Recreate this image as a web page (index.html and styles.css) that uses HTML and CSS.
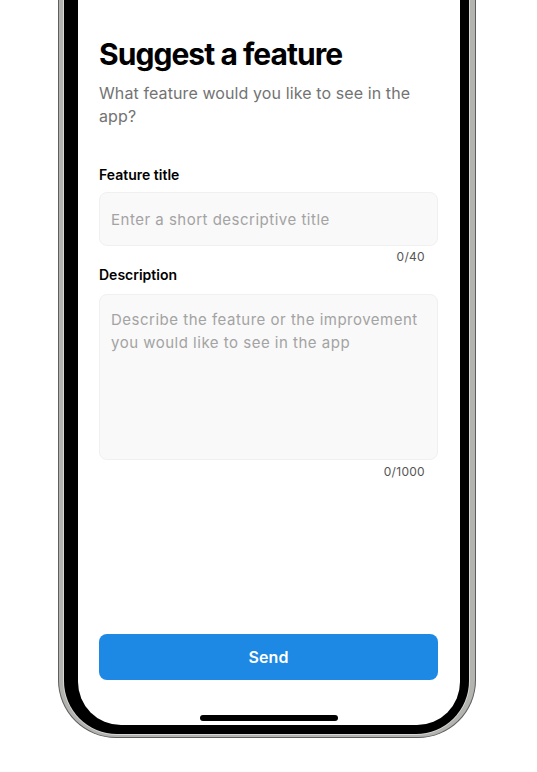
FILE: index.html
```html
<!DOCTYPE html>
<html lang="en">
<head>
<meta charset="utf-8">
<title>Suggest a feature</title>
<link rel="stylesheet" href="styles.css">
</head>
<body>
<div class="page">
  <div class="phone">
    <div class="bezel">
      <div class="screen">
        <h1 class="title">Suggest a feature</h1>
        <p class="subtitle">What feature would you like to see in the app?</p>

        <label class="label" for="ftitle">Feature title</label>
        <input class="field" id="ftitle" type="text" placeholder="Enter a short descriptive title">
        <div class="counter">0/40</div>

        <label class="label label-desc" for="fdesc">Description</label>
        <textarea class="field area" id="fdesc" placeholder="Describe the feature or the improvement you would like to see in the app"></textarea>
        <div class="counter counter-desc">0/1000</div>

        <button class="send" type="button">Send</button>
        <div class="home-indicator"></div>
      </div>
    </div>
  </div>
</div>
</body>
</html>
```

FILE: styles.css
```css
* { box-sizing: border-box; }

html, body {
  margin: 0;
  padding: 0;
  background: #ffffff;
}

body {
  font-family: "Inter", "Noto Sans", "Liberation Sans", sans-serif;
  color: #000;
  width: 537px;
  height: 772px;
  overflow: hidden;
}

.page {
  padding-left: 58px;
}

.phone {
  width: 418px;
  background: #b3b3b0;
  border: 1px solid #5e5e5e;
  border-top: 0;
  border-radius: 0 0 58px 58px;
  padding: 0 6px 3px 5px;
}

.bezel {
  background: #000;
  border-radius: 0 0 53px 53px;
  padding: 0 9px 9px 14px;
  box-shadow: -1px 0 0 #d8d8d6, 1px 0 0 #d8d8d6, 0 1px 0 #d8d8d6;
}

.screen {
  background: #fff;
  height: 725px;
  border-radius: 0 0 43px 43px;
  padding: 36px 22px 0 21px;
  display: flex;
  flex-direction: column;
}

.title {
  margin: 0;
  font-size: 30px;
  line-height: 36px;
  font-weight: 700;
  letter-spacing: -0.95px;
}

.subtitle {
  margin: 10px 0 0;
  font-size: 16px;
  line-height: 23px;
  color: #737373;
  letter-spacing: 0.1px;
}

.label {
  display: block;
  margin-top: 37px;
  font-size: 14px;
  line-height: 20px;
  font-weight: 600;
}

.label-desc {
  margin-top: 0;
}

.field {
  display: block;
  width: 100%;
  margin-top: 7px;
  height: 54px;
  background: #f9f9f9;
  border: 1px solid #f0f0f0;
  border-radius: 8px;
  padding: 0 11px;
  font-family: inherit;
  font-size: 15px;
  color: #222;
  letter-spacing: 0.5px;
  outline: none;
}

.field::placeholder {
  color: #a3a3a3;
}

.area {
  height: 166px;
  margin-top: 9px;
  padding: 13px 11px;
  line-height: 23px;
  resize: none;
}

.counter {
  margin-top: 3px;
  padding-right: 13px;
  text-align: right;
  font-size: 12px;
  line-height: 16px;
  color: #555;
  letter-spacing: 0.3px;
}

.counter-desc {
  margin-top: 4px;
}

.send {
  margin-top: auto;
  height: 46px;
  width: 100%;
  border: 0;
  border-radius: 8px;
  background: #1e88e5;
  color: #fff;
  font-family: inherit;
  font-size: 16px;
  font-weight: 600;
  letter-spacing: 0.1px;
}

.home-indicator {
  align-self: center;
  width: 138px;
  height: 6px;
  border-radius: 3px;
  background: #000;
  margin: 35px 0 4px;
}
```
